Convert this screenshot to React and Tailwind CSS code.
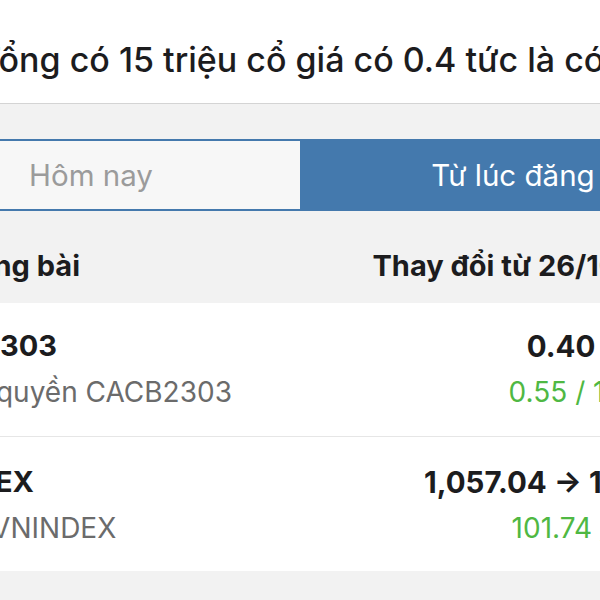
import React from 'react';

const rows = [
  {
    code: 'CACB2303',
    name: 'Chứng quyền CACB2303',
    price: '0.40 → 0.95',
    change: '0.55 / 137.50%',
    pad: 'pt-[26px] pb-[27px] border-b border-[#e6e6e6]',
  },
  {
    code: 'VNINDEX',
    name: 'Chỉ số VNINDEX',
    price: '1,057.04 → 1,158.78',
    change: '101.74 / 9.63%',
    pad: 'pt-[28px] pb-[26px]',
  },
];

export default function App() {
  return (
    <div className="w-[600px] h-[600px] overflow-hidden bg-[#f2f2f2] font-['Inter',sans-serif] text-[#1c1c1e]">
      {/* tiêu đề bài viết */}
      <div className="bg-white border-b border-[#d4d4d4] pt-[40px] pb-[23px] -ml-[21px] w-[900px]">
        <p className="text-[34px] leading-[40px] font-medium whitespace-nowrap">
          Tổng có 15 triệu cổ giá có 0.4 tức là có 6 tỷ
        </p>
      </div>

      <div className="-ml-[120px] w-[844px]">
        {/* segmented control */}
        <div className="mt-[35px] grid grid-cols-2 h-[72px] border-y-2 border-[#4479ad]">
          <button className="bg-[#f7f7f7] border-x-2 border-[#4479ad] text-[29.5px] text-[#9b9b9b] flex items-center justify-center">
            Hôm nay
          </button>
          <button className="bg-[#4479ad] text-[29.5px] text-white flex items-center justify-center">
            Từ lúc đăng
          </button>
        </div>

        {/* header */}
        <div className="flex justify-between px-[20px] pt-[39px] pb-[21px] text-[29px] leading-[32px] font-bold whitespace-nowrap">
          <span>Lúc đăng bài</span>
          <span>Thay đổi từ 26/10/2022</span>
        </div>

        {/* danh sách */}
        <div className="bg-white">
          {rows.map((r) => (
            <div key={r.code} className={`flex justify-between px-[20px] ${r.pad} whitespace-nowrap`}>
              <div className="flex flex-col gap-[12px]">
                <span className="text-[29px] leading-[34px] font-bold">{r.code}</span>
                <span className="text-[28px] leading-[34px] text-[#6b6b6b]">{r.name}</span>
              </div>
              <div className="flex flex-col items-end gap-[12px]">
                <span className="text-[29.5px] leading-[34px] font-bold">{r.price}</span>
                <span className="text-[28px] leading-[34px] text-[#4fb843]">{r.change}</span>
              </div>
            </div>
          ))}
        </div>
      </div>
    </div>
  );
}
